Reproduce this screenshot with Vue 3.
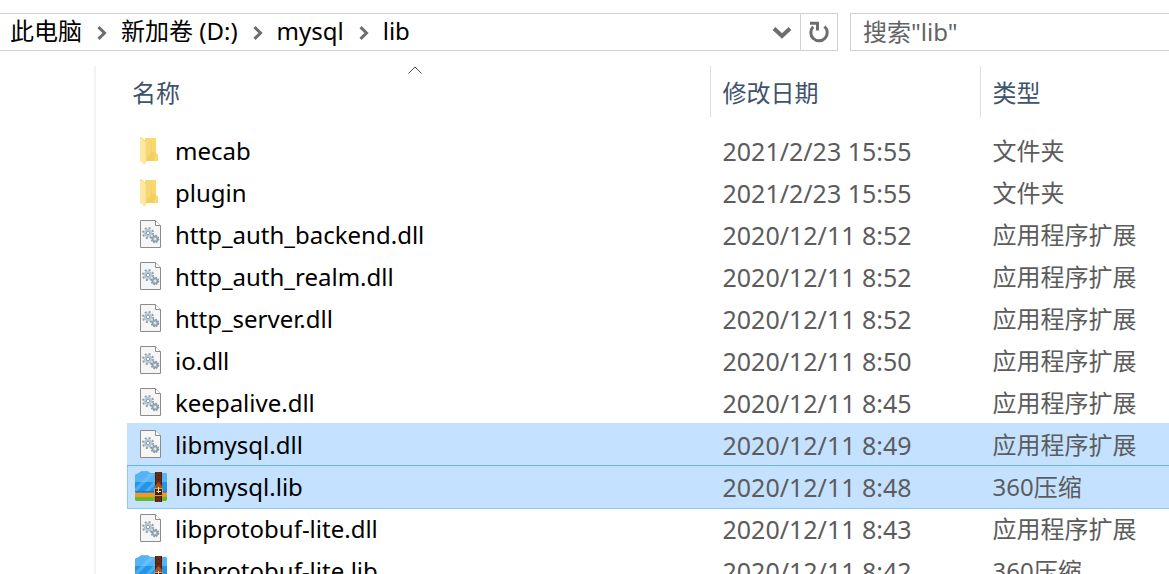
<script setup>
const crumbs = ['此电脑', '新加卷 (D:)', 'mysql', 'lib']

const DLL = '应用程序扩展'
const files = [
  { name: 'mecab', date: '2021/2/23 15:55', type: '文件夹', icon: 'folder' },
  { name: 'plugin', date: '2021/2/23 15:55', type: '文件夹', icon: 'folder' },
  { name: 'http_auth_backend.dll', date: '2020/12/11 8:52', type: DLL, icon: 'dll' },
  { name: 'http_auth_realm.dll', date: '2020/12/11 8:52', type: DLL, icon: 'dll' },
  { name: 'http_server.dll', date: '2020/12/11 8:52', type: DLL, icon: 'dll' },
  { name: 'io.dll', date: '2020/12/11 8:50', type: DLL, icon: 'dll' },
  { name: 'keepalive.dll', date: '2020/12/11 8:45', type: DLL, icon: 'dll' },
  { name: 'libmysql.dll', date: '2020/12/11 8:49', type: DLL, icon: 'dll', selected: true },
  { name: 'libmysql.lib', date: '2020/12/11 8:48', type: '360压缩', icon: 'zip', selected: true, focused: true },
  { name: 'libprotobuf-lite.dll', date: '2020/12/11 8:43', type: DLL, icon: 'dll' },
  { name: 'libprotobuf-lite.lib', date: '2020/12/11 8:42', type: '360压缩', icon: 'zip' },
]
</script>

<template>
  <div class="explorer">
    <header class="toolbar">
      <nav class="address" aria-label="地址">
        <ol class="crumbs">
          <li v-for="(crumb, i) in crumbs" :key="crumb">
            <svg v-if="i > 0" class="chevron" viewBox="0 0 10 14" aria-hidden="true">
              <path d="M1.500 1.200 7.500 7l-6 5.800" />
            </svg>
            <a href="#">{{ crumb }}</a>
          </li>
        </ol>
        <button class="history" type="button" aria-label="以前的位置">
          <svg viewBox="0 0 20 14" width="20" height="14"><path d="M2 3.500 10 11 18 3.500" /></svg>
        </button>
        <button class="refresh" type="button" aria-label="刷新">
          <svg viewBox="0 0 20 22" width="20" height="22">
            <path d="M4.200 5.800A8.200 8.200 0 1 0 15.500 5.500" />
            <path d="M1 2.200H8.500V9.500" />
          </svg>
        </button>
      </nav>
      <input class="search" type="search" aria-label="搜索" placeholder='搜索"lib"' />
    </header>

    <main class="content">
      <aside class="pane"></aside>
      <table class="files">
        <colgroup>
          <col class="col-name" />
          <col class="col-date" />
          <col />
        </colgroup>
        <thead>
          <tr>
            <th scope="col" aria-sort="ascending">
              <svg class="sort" viewBox="0 0 14 8" width="14" height="8"><path d="M.5 7.500 7 1l6.500 6.500" /></svg>
              <button type="button">名称</button>
            </th>
            <th scope="col"><button type="button">修改日期</button></th>
            <th scope="col"><button type="button">类型</button></th>
          </tr>
        </thead>
        <tbody>
          <tr v-for="file in files" :key="file.name" :class="{ selected: file.selected, focused: file.focused }">
            <td>
              <div class="name">
                <svg v-if="file.icon === 'folder'" class="icon" viewBox="0 0 32 32" aria-hidden="true">
                  <path d="M10 3H21V18L23 20V26H10Z" fill="#f7d774" />
                  <path d="M16 3H21V18L23 20V26H12V22L16 19Z" fill="#fad96a" />
                  <path d="M16 3V19L12 22V26H19L21 18 17 16Z" fill="#efc85c" opacity=".65" />
                  <path d="M5 3H7L11 7V27L10 30 5 26Z" fill="#ffe9a2" />
                  <path d="M5 3H7L11 7V27" fill="none" stroke="#f6d67b" />
                </svg>
                <svg v-else-if="file.icon === 'dll'" class="icon" viewBox="0 0 32 32" aria-hidden="true">
                  <path d="M5.500 1.500H20.500L25.500 6.500V28.500H5.500Z" fill="#f6f6f6" stroke="#8c8c8c" />
                  <path d="M20.500 1.500V6.500H25.500" fill="#fff" stroke="#8c8c8c" />
                  <circle cx="13" cy="14" r="5" fill="none" stroke="#8fa0ac" stroke-width="2" stroke-dasharray="2 1.930" />
                  <circle cx="13" cy="14" r="3.300" fill="#eef4f8" stroke="#b4cad8" stroke-width="2" />
                  <circle cx="13" cy="14" r="1.800" fill="#fff" stroke="#8594a0" />
                  <circle cx="20" cy="20" r="3.500" fill="#a9bdca" stroke="#8496a3" stroke-width="1.500" stroke-dasharray="1.600 1.150" />
                  <circle cx="20" cy="20" r="2.600" fill="#a9bdca" stroke="#8b9ba8" />
                  <circle cx="20" cy="20" r="1" fill="#edf4f8" />
                </svg>
                <svg v-else class="icon" viewBox="0 0 32 32" aria-hidden="true">
                  <path d="M0 23H32V29L31 30H1L0 29Z" fill="#68b82b" />
                  <path d="M0 20H32V25L31 26H1L0 25Z" fill="#ff9318" />
                  <path d="M0 4 2 3 4 2 6 .5H13L15 2H31L32 3V20L31 22H1L0 20Z" fill="#2395e8" />
                  <path d="M0 4 2 3 4 2 6 .5H13L15 2H31L32 3V11H0Z" fill="#54b4f5" />
                  <path d="M0 17 14 3H19L1 21H0ZM9 21 20 9V14L13 21Z" fill="#8dd0fb" opacity=".4" />
                  <path d="M0 20.500H32" stroke="#1679ca" />
                  <path d="M20 1H27V31H20Z" fill="#6b2b13" />
                  <path d="M20.500 1V31M26.500 1V31" stroke="#4a1c0b" />
                  <path d="M20 15 23.500 11 27 15V18H20Z" fill="#a5521c" />
                  <path d="M19.500 17.500H27.500V24.500H19.500Z" fill="#4a1e0d" stroke="#d39c52" />
                  <path d="M23.500 16V22M21.500 20.500H26" stroke="#ffe0a0" />
                  <path d="M23 4H24V5H23ZM23 8H24V9H23Z" fill="#2e0e05" />
                </svg>
                <span>{{ file.name }}</span>
              </div>
            </td>
            <td class="date">{{ file.date }}</td>
            <td>{{ file.type }}</td>
          </tr>
        </tbody>
      </table>
    </main>
  </div>
</template>

<style>
body {
  margin: 0;
  background: #fff;
}
</style>

<style scoped>
.explorer {
  box-sizing: border-box;
  height: 100vh;
  padding-top: 13px;
  overflow: hidden;
  display: flex;
  flex-direction: column;
  background: #fff;
  color: #000;
  font-family: "Noto Sans", "Noto Sans CJK SC", sans-serif;
  font-size: 24px;
  line-height: 36px;
}

button {
  padding: 0;
  border: 0;
  background: none;
  color: inherit;
  font: inherit;
}

.toolbar {
  flex: none;
  display: grid;
  grid-template-columns: 838fr 319fr;
  gap: 12px;
}

.address {
  display: flex;
  border: 1px solid #d0d0d0;
  border-left: 0;
}

.crumbs {
  flex: 1;
  display: flex;
  margin: 0;
  padding: 0 0 2px 10px;
  line-height: 34px;
  list-style: none;
}

.crumbs li {
  display: flex;
  align-items: center;
  white-space: nowrap;
}

.crumbs a {
  color: inherit;
  text-decoration: none;
}

.chevron {
  width: 10px;
  height: 14px;
  margin: 4px 14px 0 15px;
}

.chevron path,
.history path,
.refresh path {
  fill: none;
  stroke: #6d6d6d;
  stroke-width: 3;
}

.history path {
  stroke-width: 4;
}

.history,
.refresh {
  width: 37px;
  display: flex;
  align-items: center;
  justify-content: center;
}

.refresh {
  border-left: 1px solid #d0d0d0;
}

.search {
  box-sizing: border-box;
  width: 100%;
  min-width: 0;
  height: 38px;
  margin: 0;
  padding: 0 12px 2px;
  border: 1px solid #d0d0d0;
  border-right: 0;
  border-radius: 0;
  outline: 0;
  background: #fff;
  font: inherit;
  appearance: none;
}

.search::placeholder {
  color: #636363;
  opacity: 1;
}

.content {
  flex: 1;
  min-height: 0;
  display: flex;
  padding-top: 15px;
}

.pane {
  flex: none;
  width: 94px;
  margin-right: 31px;
  border-right: 2px solid #f3f3f3;
}

.files {
  flex: 1;
  align-self: flex-start;
  table-layout: fixed;
  width: 100%;
  border-spacing: 0;
}

.col-name {
  width: 56%;
}

.col-date {
  width: 270px;
}

th {
  position: relative;
  height: 49px;
  padding: 2px 0 0 12px;
  text-align: left;
  font-weight: 400;
  color: #40536b;
  border-right: 1px solid #dedede;
}

th:first-child {
  padding-left: 5px;
}

th:last-child {
  border-right: 0;
}

.sort {
  position: absolute;
  top: 0;
  left: 50%;
  margin-left: -10px;
}

.sort path {
  fill: none;
  stroke: #505050;
}

tbody::before {
  content: "";
  display: table-row;
  height: 13px;
}

td {
  height: 42px;
  padding: 0 0 0 12px;
  color: #5c5c5c;
  white-space: nowrap;
}

td:first-child {
  padding-left: 8px;
  color: #000;
}

.date {
  font-size: 25px;
}

.name {
  display: flex;
  align-items: center;
  gap: 8px;
}

.icon {
  flex: none;
  width: 32px;
  height: 32px;
}

.selected td {
  background: #c4e2ff;
  box-shadow: 0 -1px #c4e2ff;
}

.focused td {
  box-shadow: 0 -1px #66b3f5, 0 1px #8cc7fa;
}

.focused td:first-child {
  box-shadow: 0 -1px #66b3f5, 0 1px #8cc7fa, inset 1px 0 #8cc7fa;
}
</style>
